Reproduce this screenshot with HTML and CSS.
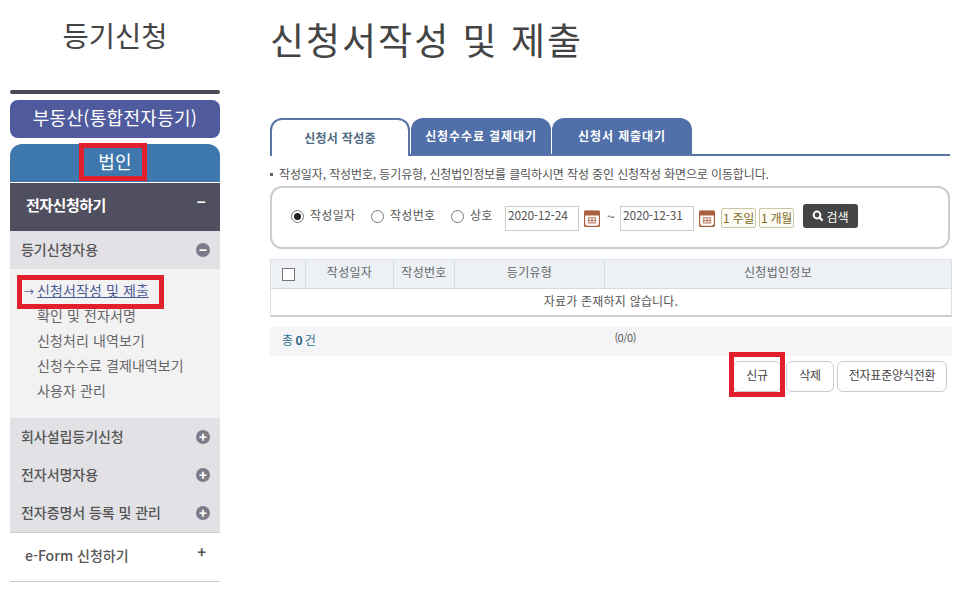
FILE: index.html
```html
<!DOCTYPE html>
<html lang="ko">
<head>
<meta charset="utf-8">
<title>신청서작성 및 제출</title>
<link rel="stylesheet" href="styles.css">
</head>
<body>
<div class="page">
  <aside class="side">
    <h2 class="side-title">등기신청</h2>
    <div class="side-rule"></div>
    <div class="pill pill-blue">부동산(통합전자등기)</div>
    <div class="pill pill-sky">법인</div>
    <div class="dark-row"><span>전자신청하기</span><span class="sign sign-white">−</span></div>
    <div class="group"><span>등기신청자용</span><span class="dot">−</span></div>
    <ul class="sublist">
      <li class="current"><span class="arrow">→</span><a>신청서작성 및 제출</a></li>
      <li>확인 및 전자서명</li>
      <li>신청처리 내역보기</li>
      <li>신청수수료 결제내역보기</li>
      <li>사용자 관리</li>
    </ul>
    <div class="group"><span>회사설립등기신청</span><span class="dot">+</span></div>
    <div class="group"><span>전자서명자용</span><span class="dot">+</span></div>
    <div class="group"><span>전자증명서 등록 및 관리</span><span class="dot">+</span></div>
    <div class="light-row"><span>e-Form 신청하기</span><span class="sign">+</span></div>
  </aside>
  <main class="main">
    <h1 class="page-title">신청서작성 및 제출</h1>
    <div class="tabs">
      <div class="tab tab-on">신청서 작성중</div>
      <div class="tab">신청수수료 결제대기</div>
      <div class="tab">신청서 제출대기</div>
    </div>
    <p class="notice"><span class="bullet"></span>작성일자, 작성번호, 등기유형, 신청법인정보를 클릭하시면 작성 중인 신청작성 화면으로 이동합니다.</p>
    <div class="search">
      <label class="radio"><span class="circle circle-on"></span>작성일자</label>
      <label class="radio"><span class="circle"></span>작성번호</label>
      <label class="radio radio-last"><span class="circle"></span>상호</label>
      <span class="date">2020-12-24</span>
      <svg class="cal" viewBox="0.5 0.8 15 15.8"><rect x="0.8" y="2" width="14.4" height="14.2" rx="2.5" fill="#fff" stroke="#a8603f" stroke-width="1.6"/><path d="M1 3.5a2 2 0 0 1 2-2h10a2 2 0 0 1 2 2V6H1z" fill="#a8603f"/><path d="M1.5 1v2M14.5 1v2" stroke="#a8603f"/><path d="M4 8h8M4 10.5h8M4 13h8M5 7.5v6M8 7.5v6M11 7.5v6" stroke="#b57a5c" stroke-width="1"/></svg>
      <span class="tilde">~</span>
      <span class="date">2020-12-31</span>
      <svg class="cal" viewBox="0.5 0.8 15 15.8"><rect x="0.8" y="2" width="14.4" height="14.2" rx="2.5" fill="#fff" stroke="#a8603f" stroke-width="1.6"/><path d="M1 3.5a2 2 0 0 1 2-2h10a2 2 0 0 1 2 2V6H1z" fill="#a8603f"/><path d="M1.5 1v2M14.5 1v2" stroke="#a8603f"/><path d="M4 8h8M4 10.5h8M4 13h8M5 7.5v6M8 7.5v6M11 7.5v6" stroke="#b57a5c" stroke-width="1"/></svg>
      <span class="period">1 주일</span>
      <span class="period">1 개월</span>
      <span class="find"><svg viewBox="0 0 12 12"><circle cx="5" cy="5" r="3.4" fill="none" stroke="#fff" stroke-width="2"/><path d="M7.6 7.6l3 3" stroke="#fff" stroke-width="2.2"/></svg>검색</span>
    </div>
    <div class="grid">
      <div class="grid-head">
        <div class="col col-check"><span class="check"></span></div>
        <div class="col col-date">작성일자</div>
        <div class="col col-no">작성번호</div>
        <div class="col col-type">등기유형</div>
        <div class="col col-info">신청법인정보</div>
      </div>
      <div class="grid-empty">자료가 존재하지 않습니다.</div>
    </div>
    <div class="total">
      <span class="total-count">총 <b>0</b> 건</span>
      <span class="total-page">(0/0)</span>
    </div>
    <div class="actions">
      <span class="btn btn-new">신규</span>
      <span class="btn btn-del">삭제</span>
      <span class="btn btn-conv">전자표준양식전환</span>
    </div>
  </main>
</div>
<div class="mark mark-corp"></div>
<div class="mark mark-item"></div>
<div class="mark mark-new"></div>
</body>
</html>
```
FILE: styles.css
```css
* { box-sizing: border-box; }
html, body { margin: 0; padding: 0; }
body {
  position: relative;
  width: 973px;
  height: 589px;
  overflow: hidden;
  background: #fff;
  color: #444;
  font-family: "Noto Sans CJK KR", "Noto Sans", sans-serif;
  font-size: 12px;
}
.page { display: flex; align-items: flex-start; }

/* sidebar */
.side { width: 210px; margin-left: 10px; flex: none; }
.side-title {
  margin: 0;
  height: 90px;
  padding-top: 14px;
  text-align: center;
  font-size: 28.5px;
  line-height: 42px;
  font-weight: 400;
  color: #444;
}
.side-rule { height: 4px; background: #4a4a55; border-radius: 2px; margin-bottom: 6px; }
.pill {
  height: 38px;
  color: #fff;
  font-size: 18px;
  line-height: 35px;
  text-align: center;
  letter-spacing: 0.3px;
}
.pill-blue { background: #4f5b9d; border-radius: 8px; margin-bottom: 6px; }
.pill-sky { background: #3f78ad; border-radius: 12px 12px 0 0; height: 39px; border-bottom: 1px solid #fff; }
.dark-row, .light-row, .group {
  display: flex;
  justify-content: space-between;
  align-items: center;
}
.dark-row {
  height: 48px;
  padding: 0 15px 5px 16px;
  background: #504f60;
  color: #fff;
  font-size: 15px;
  font-weight: 700;
  letter-spacing: -0.5px;
}
.sign { font-size: 15px; font-weight: 700; margin-top: -6px; color: #555; }
.sign-white { color: #fff; margin-right: 0; }
.group {
  height: 38px;
  padding: 0 10px 3px 11px;
  background: #e1e1e6;
  color: #555;
  font-size: 14px;
  font-weight: 500;
  letter-spacing: -0.05px;
}
.dot {
  width: 14px;
  height: 14px;
  border-radius: 50%;
  background: #7c7c88;
  color: #fff;
  font-size: 13px;
  font-weight: 900;
  line-height: 13px;
  text-align: center;
  letter-spacing: 0;
  margin-top: 3px;
}
.sublist {
  list-style: none;
  margin: 0;
  padding: 9px 0 14px 27px;
  height: 149px;
  background: #f2f2f3;
  color: #666;
  font-size: 14px;
  line-height: 25px;
  letter-spacing: 0.1px;
}
.current { position: relative; color: #4a5b94; }
.current a { text-decoration: underline; }
.arrow { position: absolute; left: -13px; top: 1px; font-size: 10px; }
.light-row {
  height: 50px;
  padding: 0 14px 5px 15px;
  border-top: 1px solid #ccc;
  border-bottom: 1px solid #ccc;
  color: #555;
  font-size: 14px;
  font-weight: 500;
  letter-spacing: 0;
}

/* main */
.main { width: 682px; margin-left: 50px; flex: none; }
.page-title {
  margin: 0;
  height: 118px;
  padding-top: 14px;
  font-size: 37px;
  line-height: 50px;
  font-weight: 400;
  color: #444;
  letter-spacing: 2px;
}
.tabs { display: flex; gap: 1px; width: 680px; height: 38px; border-bottom: 2px solid #5a74a8; }
.tab {
  width: 140px;
  height: 36px;
  border-radius: 12px 12px 0 0;
  background: #516fa9;
  color: #fff;
  font-size: 12px;
  font-weight: 700;
  line-height: 36px;
  text-align: center;
  letter-spacing: 0.9px;
}
.tab-on {
  height: 38px;
  background: #fff;
  border: 2px solid #5a74a8;
  border-bottom: 0;
  color: #4f6a80;
  line-height: 36px;
  letter-spacing: 0.3px;
}
.notice {
  display: flex;
  align-items: center;
  margin: 9px 0 0;
  height: 18px;
  color: #555;
  font-size: 12px;
  line-height: 18px;
  letter-spacing: -0.12px;
}
.bullet { width: 3px; height: 3px; background: #666; margin-right: 6px; }
.search {
  display: flex;
  align-items: center;
  width: 680px;
  height: 63px;
  margin-top: 3px;
  padding: 0 0 2px 19px;
  border: 2px solid #ccc;
  border-radius: 12px;
  color: #555;
}
.radio { display: flex; align-items: center; width: 80px; margin-top: -4px; letter-spacing: 0.3px; }
.radio-last { width: 54px; }
.circle { width: 13px; height: 13px; border: 1px solid #777; border-radius: 50%; margin-right: 6px; margin-top: 3px; position: relative; background: #fff; }
.circle-on::after { content: ""; position: absolute; inset: 2px; border-radius: 50%; background: #222; }
.date {
  width: 74px;
  height: 25px;
  border: 1px solid #ccc;
  padding-left: 2px;
  line-height: 15px;
  color: #555;
  font-size: 12px;
  letter-spacing: -0.2px;
  margin-top: 3px;
}
.cal { width: 16px; height: 17px; margin: 4px 0 0 5px; }
.tilde { width: 20px; text-align: center; padding-left: 2px; font-size: 14px; margin-top: -1px; }
.period {
  width: 35px;
  height: 20px;
  margin: 3px 0 0 6px;
  border: 1px solid #ccc5a8;
  border-radius: 2px;
  background: #fdfcf5;
  color: #7d6a1d;
  font-size: 12px;
  line-height: 18px;
  text-align: center;
  white-space: nowrap;
  letter-spacing: -0.3px;
}
.period + .period { margin-left: 3px; }
.find {
  display: flex;
  align-items: center;
  justify-content: center;
  gap: 2px;
  width: 55px;
  height: 24px;
  margin: -1px 0 0 9px;
  background: #444;
  border-radius: 3px;
  color: #fff;
  font-size: 12px;
}
.find svg { width: 12px; height: 12px; }
.grid { width: 682px; margin-top: 10px; border: 1px solid #dde1e5; border-bottom: 2px solid #ccc; }
.grid-head { display: flex; height: 29px; background: #edf1f5; border-bottom: 1px solid #d5dade; }
.col {
  display: flex;
  align-items: center;
  justify-content: center;
  border-right: 1px solid #d5dade;
  color: #666;
  letter-spacing: 0.3px;
  padding-bottom: 5px;
}
.col-check { width: 35px; padding: 0; }
.col-date { width: 88px; }
.col-no { width: 61px; }
.col-type { width: 150px; }
.col-info { flex: 1; border-right: 0; }
.check { width: 13px; height: 13px; border: 1px solid #777; background: #fff; }
.grid-empty { height: 26px; text-align: center; line-height: 24px; color: #555; background: #fff; letter-spacing: 0.2px; }
.total {
  position: relative;
  display: flex;
  width: 682px;
  height: 29px;
  margin-top: 10px;
  padding-left: 12px;
  background: #f5f5f7;
  line-height: 26px;
}
.total-count { color: #2f6f8f; letter-spacing: -0.5px; }
.total-count b { color: #2a5f80; }
.total-page { margin-left: 299px; margin-top: -3px; font-size: 11px; color: #555; letter-spacing: -0.5px; }
.actions { display: flex; justify-content: flex-end; gap: 3px; width: 677px; margin-top: 5px; }
.btn {
  height: 31px;
  border: 1px solid #ccc;
  border-radius: 6px;
  background: #fff;
  color: #444;
  font-size: 12px;
  line-height: 26px;
  text-align: center;
  letter-spacing: -0.2px;
}
.btn-new, .btn-del { width: 48px; }
.btn-new { margin-right: 2px; }
.btn-conv { width: 110px; }

/* red annotations laid over the screenshot */
.mark { position: absolute; border: 5px solid #e2202c; }
.mark-corp { left: 79px; top: 143px; width: 68px; height: 38px; }
.mark-item { left: 17px; top: 275px; width: 147px; height: 34px; }
.mark-new { left: 729px; top: 352px; width: 56px; height: 45px; }
```
